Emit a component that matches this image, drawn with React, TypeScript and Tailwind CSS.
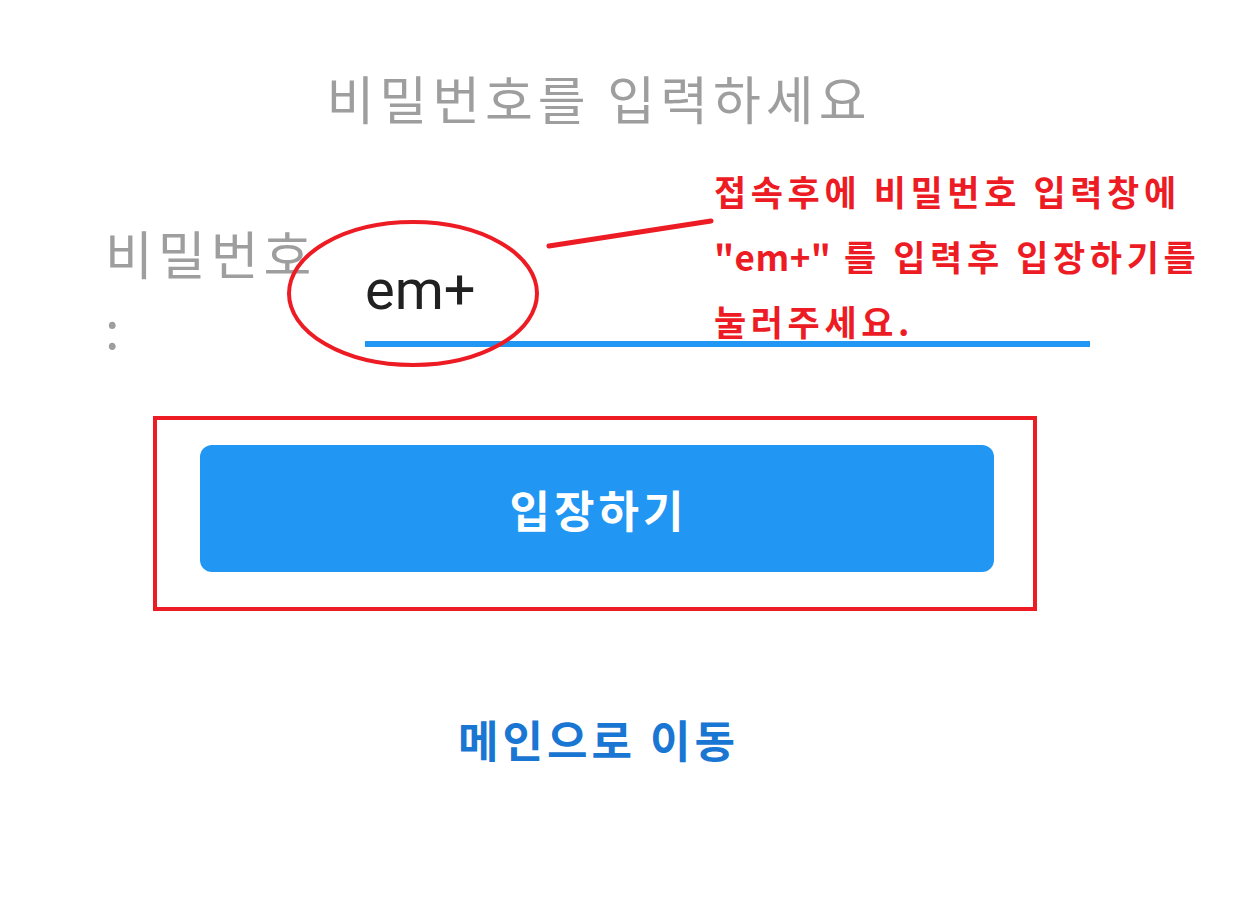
import { useState } from "react";

const KR = "font-['Noto_Sans_CJK_KR','Noto_Sans',sans-serif]";

export default function App() {
  const [password, setPassword] = useState("em+");

  return (
    <div className={`relative h-[921px] w-full overflow-hidden bg-white ${KR}`}>
      <div className="w-[1193px] pt-[72px]">
        <h1 className="pl-[5px] text-center text-[52px] font-normal leading-none tracking-[5px] text-[#9e9e9e]">
          비밀번호를 입력하세요
        </h1>

        {/* 입력 행 */}
        <div className="mt-[92px] flex items-start pl-[105px]">
          <label
            htmlFor="pw"
            className="w-[220px] text-[52px] leading-[74px] tracking-[5px] text-[#9e9e9e]"
          >
            비밀번호 :
          </label>
          <div className="ml-[40px] mt-[41px] w-[725px] border-b-[6px] border-[#2196f3] pb-[18px]">
            <input
              id="pw"
              value={password}
              onChange={(e) => setPassword(e.target.value)}
              className="block h-[66px] w-full bg-transparent p-0 font-['Roboto',sans-serif] text-[56px] text-[#212121] outline-none"
            />
          </div>
        </div>

        {/* 입장 버튼 */}
        <div className="relative mx-auto mt-[81px] w-[794px]">
          <button className="flex h-[127px] w-full items-center justify-center rounded-[12px] bg-[#2196f3] pl-[4px] text-[44px] font-bold leading-none tracking-[4px] text-white">
            입장하기
          </button>
          <div className="pointer-events-none absolute -left-[47px] -top-[29px] h-[195px] w-[884px] border-4 border-[#ed1c24]" />
        </div>

        <div className="mt-[145px] pl-[4px] text-center">
          <a href="#" className="text-[44px] font-bold leading-none tracking-[4px] text-[#1976d2]">
            메인으로 이동
          </a>
        </div>
      </div>

      {/* 안내 주석 */}
      <svg
        className="pointer-events-none absolute left-0 top-0"
        width="1257"
        height="921"
      >
        <ellipse
          cx="413"
          cy="293.5"
          rx="124"
          ry="71.5"
          fill="none"
          stroke="#ed1c24"
          strokeWidth="4"
        />
        <line
          x1="549"
          y1="246"
          x2="711"
          y2="221"
          stroke="#ed1c24"
          strokeWidth="5"
          strokeLinecap="round"
        />
      </svg>
      <p className="pointer-events-none absolute left-[714px] top-[158px] whitespace-nowrap text-[35px] font-bold leading-[65px] tracking-[4.6px] text-[#ed1c24]">
        접속후에 비밀번호 입력창에
        <br />
        <span className="tracking-[0.5px]">"em+"</span> 를 입력후 입장하기를
        <br />
        눌러주세요.
      </p>
    </div>
  );
}
